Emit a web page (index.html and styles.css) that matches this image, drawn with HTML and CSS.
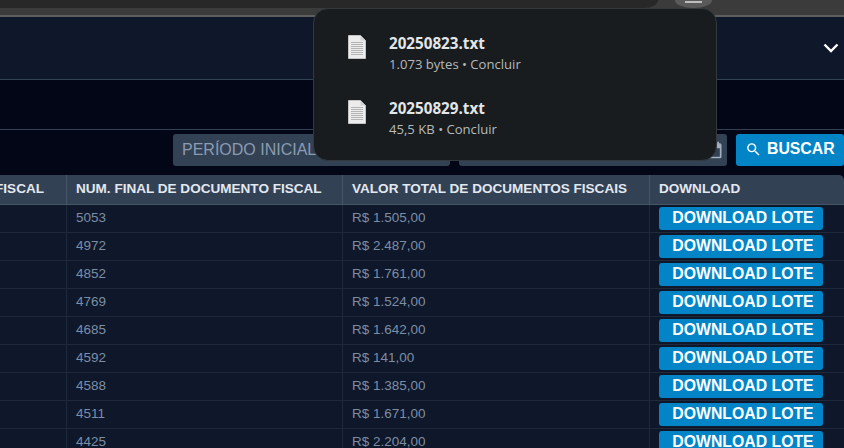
FILE: index.html
```html
<!DOCTYPE html>
<html lang="pt-BR">
<head>
<meta charset="utf-8">
<title>Downloads</title>
<link rel="stylesheet" href="styles.css">
</head>
<body>
<div class="chrome">
  <div class="chrome-top">
    <div class="omnibox"></div>
    <div class="avatar"><span class="avatar-bar"></span></div>
  </div>
  <div class="chrome-line"></div>
</div>
<header class="topbar">
  <svg class="chevron" width="16" height="10" viewBox="0 0 16 10"><path d="M1.5 1.5 8 8l6.500-6.500" fill="none" stroke="#fff" stroke-width="2.400"/></svg>
</header>
<div class="band"></div>
<form class="filters">
  <div class="field field-start">PERÍODO INICIAL</div>
  <div class="field field-end">
    <svg class="calendar" width="20" height="20" viewBox="0 0 24 24"><path d="M19 4h-1V2h-2v2H8V2H6v2H5a2 2 0 0 0-2 2v14a2 2 0 0 0 2 2h14a2 2 0 0 0 2-2V6a2 2 0 0 0-2-2zm0 16H5V10h14v10z" fill="#a3afc0"/></svg>
  </div>
  <button type="button" class="search-btn">
    <svg width="17" height="17" viewBox="0 0 24 24"><path d="M15.500 14h-.79l-.28-.27A6.470 6.470 0 0 0 16 9.500 6.500 6.500 0 1 0 9.500 16c1.610 0 3.090-.59 4.230-1.570l.27.28v.79l5 4.990L20.490 19l-4.990-5zm-6 0C7.010 14 5 11.990 5 9.500S7.010 5 9.500 5 14 7.010 14 9.500 11.990 14 9.500 14z" fill="#fff"/></svg>
    BUSCAR
  </button>
</form>
<table class="grid">
  <colgroup><col class="c1"><col class="c2"><col class="c3"><col class="c4"></colgroup>
  <thead>
    <tr>
      <th class="clip"><span>NUM. INICIAL DE DOCUMENTO FISCAL</span></th>
      <th>NUM. FINAL DE DOCUMENTO FISCAL</th>
      <th>VALOR TOTAL DE DOCUMENTOS FISCAIS</th>
      <th class="last">DOWNLOAD</th>
    </tr>
  </thead>
  <tbody>
    <tr><td></td><td>5053</td><td>R$ 1.505,00</td><td class="action"><button type="button" class="lote">DOWNLOAD LOTE</button></td></tr>
    <tr><td></td><td>4972</td><td>R$ 2.487,00</td><td class="action"><button type="button" class="lote">DOWNLOAD LOTE</button></td></tr>
    <tr><td></td><td>4852</td><td>R$ 1.761,00</td><td class="action"><button type="button" class="lote">DOWNLOAD LOTE</button></td></tr>
    <tr><td></td><td>4769</td><td>R$ 1.524,00</td><td class="action"><button type="button" class="lote">DOWNLOAD LOTE</button></td></tr>
    <tr><td></td><td>4685</td><td>R$ 1.642,00</td><td class="action"><button type="button" class="lote">DOWNLOAD LOTE</button></td></tr>
    <tr><td></td><td>4592</td><td>R$ 141,00</td><td class="action"><button type="button" class="lote">DOWNLOAD LOTE</button></td></tr>
    <tr><td></td><td>4588</td><td>R$ 1.385,00</td><td class="action"><button type="button" class="lote">DOWNLOAD LOTE</button></td></tr>
    <tr><td></td><td>4511</td><td>R$ 1.671,00</td><td class="action"><button type="button" class="lote">DOWNLOAD LOTE</button></td></tr>
    <tr><td></td><td>4425</td><td>R$ 2.204,00</td><td class="action"><button type="button" class="lote">DOWNLOAD LOTE</button></td></tr>
  </tbody>
</table>
<aside class="downloads">
  <div class="dl-row">
    <svg class="file" width="18" height="24" viewBox="0 0 18 24"><path d="M.5.500h12l5 5v18H.500z" fill="#ececec" stroke="#c4c4c4"/><path d="M12.500.500v5h5z" fill="#d0d0d0"/><path d="M3 7.500h12M3 9.500h12M3 11.500h12M3 13.500h12M3 15.500h12M3 17.500h12M3 19.500h12" stroke="#b4b4b4"/></svg>
    <div class="dl-text"><div class="dl-name">20250823.txt</div><div class="dl-meta">1.073 bytes • Concluir</div></div>
  </div>
  <div class="dl-row">
    <svg class="file" width="18" height="24" viewBox="0 0 18 24"><path d="M.5.500h12l5 5v18H.500z" fill="#ececec" stroke="#c4c4c4"/><path d="M12.500.500v5h5z" fill="#d0d0d0"/><path d="M3 7.500h12M3 9.500h12M3 11.500h12M3 13.500h12M3 15.500h12M3 17.500h12M3 19.500h12" stroke="#b4b4b4"/></svg>
    <div class="dl-text"><div class="dl-name">20250829.txt</div><div class="dl-meta">45,5 KB • Concluir</div></div>
  </div>
</aside>
</body>
</html>
```
FILE: styles.css
```css
* { box-sizing: border-box; }
html, body { margin: 0; height: 100%; overflow: hidden; }
body {
  position: relative;
  background: #020617;
  font-family: "Liberation Sans", Arial, sans-serif;
}
.chrome-top { display: flex; height: 15px; background: #3b3b3b; align-items: flex-start; }
.omnibox { width: 658px; height: 8px; background: #282828; border-bottom-right-radius: 14px 8px; }
.avatar {
  width: 37px; height: 8px; margin-left: 17px; background: #5a5a5a;
  border-radius: 0 0 19px 19px / 0 0 8px 8px;
  display: flex; justify-content: center; padding-top: 1px;
}
.avatar-bar { width: 17px; height: 2px; background: #bdbdbd; }
.chrome-line { height: 2px; background: #5e5e5e; }
.topbar {
  height: 63px; background: #0f172a; border-bottom: 1px solid #334155;
  display: flex; align-items: center; justify-content: flex-end; padding: 0 5px 0 0;
}
.band { height: 50px; background: #020617; border-bottom: 1px solid #334155; }
.filters { height: 45px; display: flex; justify-content: flex-end; gap: 9px; padding-top: 4px; }
.field {
  height: 32px; background: #334155; border-radius: 3px; color: #8b9bb0;
  font-size: 16px; line-height: 31px; padding: 0 9px;
}
.field-start { width: 277px; }
.field-end { width: 268px; display: flex; align-items: center; justify-content: flex-end; padding-right: 3px; }
.search-btn {
  width: 108px; height: 32px; border: 0; border-radius: 3px; background: #0284c7; color: #fff;
  font: bold 15.800px "Liberation Sans", Arial, sans-serif; display: flex; align-items: center;
  gap: 5px; padding: 0 0 2px 9px;
}
.grid { width: 844px; table-layout: fixed; border-collapse: separate; border-spacing: 0; }
.c1 { width: 66px; } .c2 { width: 276px; } .c3 { width: 307px; } .c4 { width: 195px; }
th {
  height: 30px; padding: 0 0 2px 9px; background: #334155; color: #e2e8f0; text-align: left;
  font-size: 13.550px; font-weight: bold; white-space: nowrap; overflow: hidden;
  border-left: 1px solid #475569; border-bottom: 1px solid #475569;
}
th.clip { border-left: 0; padding: 0 22px 2px 0; direction: rtl; }
th.clip span { direction: ltr; unicode-bidi: bidi-override; }
th.last { border-top-right-radius: 5px; }
td {
  height: 28px; padding: 0 0 2px 9px; background: #0f172a; color: #7c8ea6; font-size: 13.500px;
  border-left: 1px solid #1e293b; border-bottom: 1px solid #1e293b;
}
td:first-child { border-left: 0; }
td.action { padding-bottom: 0; }
.lote {
  display: block; width: 164px; height: 23px; border: 0; border-radius: 3px; padding: 0 0 2px 4px;
  background: #0284c7; color: #fff; font: bold 15.800px/21px "Liberation Sans", Arial, sans-serif;
}
.downloads {
  position: absolute; left: 313px; top: 8px; width: 404px; height: 153px;
  padding: 12px 0 0; background: #181c1e; border: 1px solid #33393c; border-radius: 15px;
}
.dl-row { display: flex; align-items: flex-start; height: 65px; padding: 12px 0 0 34px; gap: 23px; }
.file { margin-top: 2px; }
.dl-name { font: 700 15.200px/20px "Open Sans", sans-serif; color: #e3e6e8; }
.dl-meta { font: 13.100px/20px "Open Sans", sans-serif; color: #b4babd; margin-top: 1px; }
```
